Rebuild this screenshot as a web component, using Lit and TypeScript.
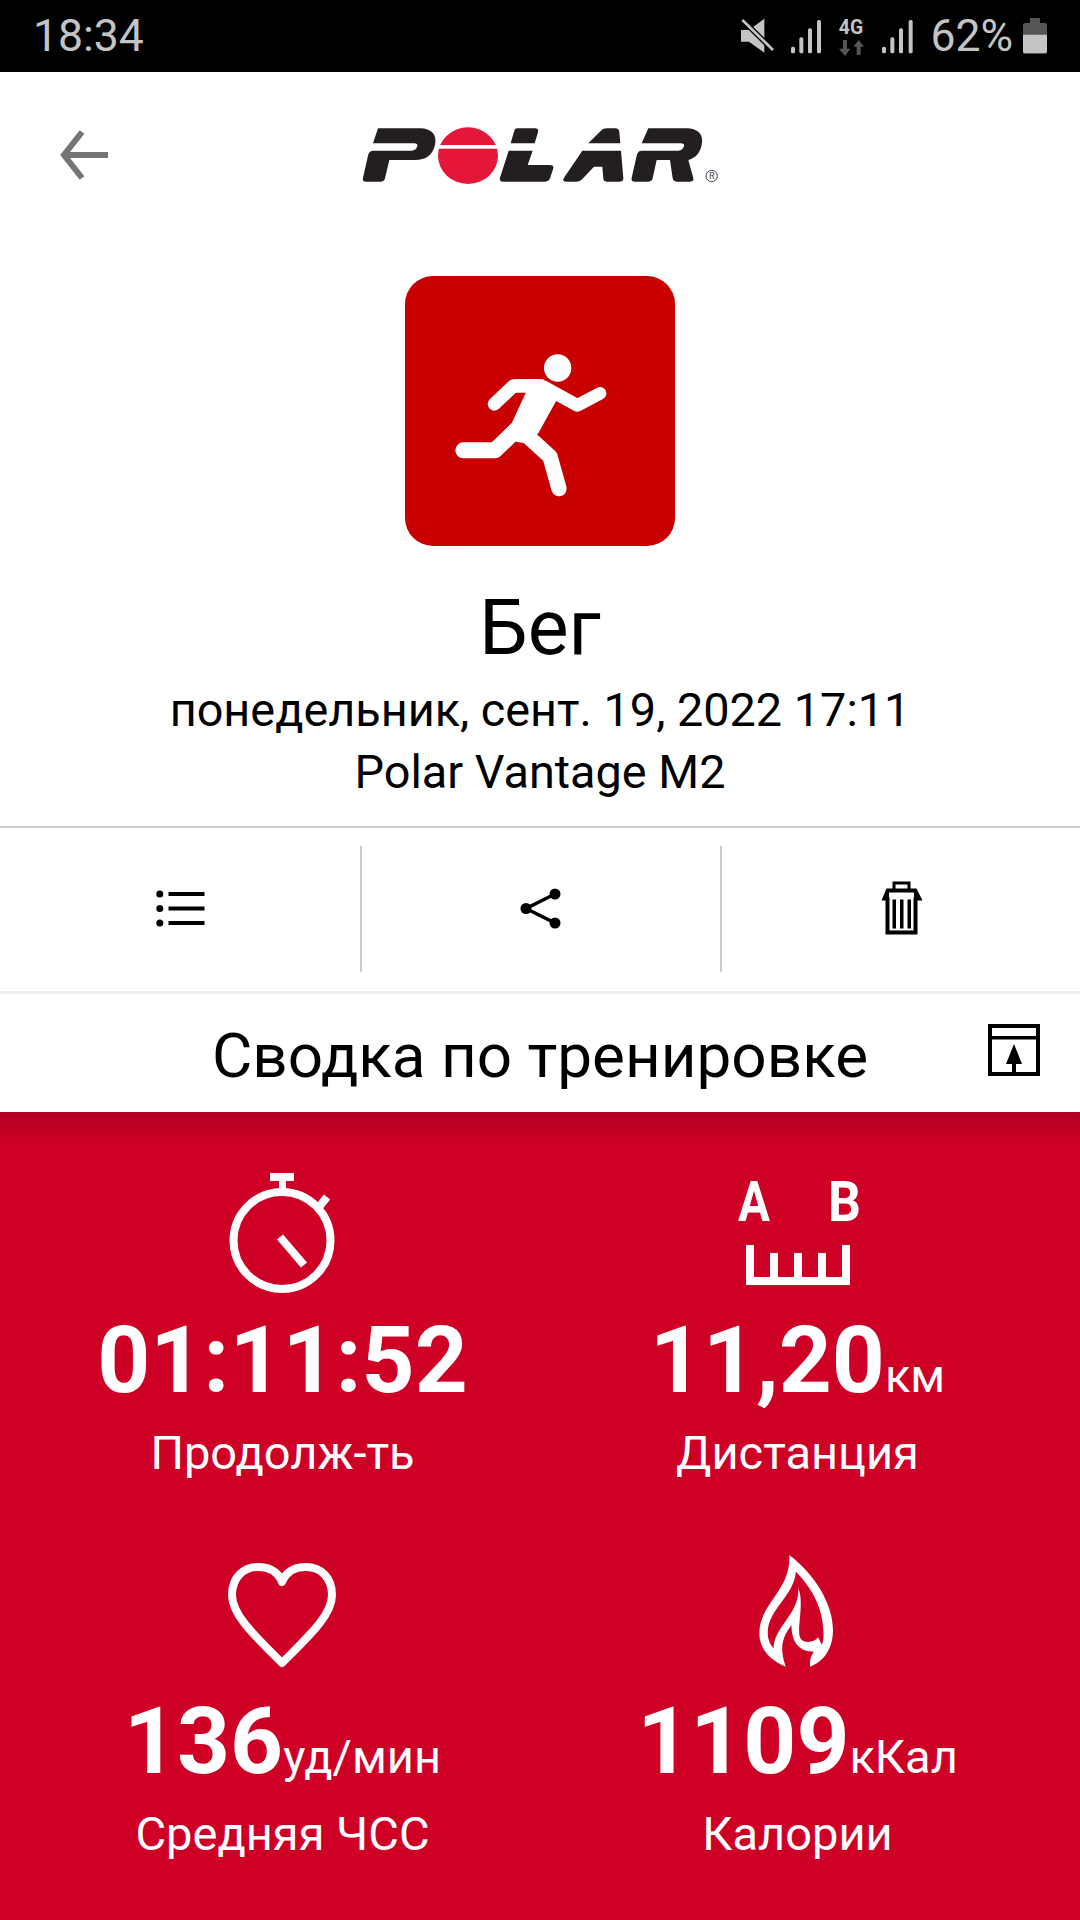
import { LitElement, html, css, svg } from "lit";
import { customElement } from "lit/decorators.js";

const bars = (x: number[]) => svg`${[140, 112, 85, 60].map((y, i) => svg`<rect x=${x[i]} y=${y} width="12" height=${160 - y} rx="5" fill="#c4c4c4"/>`)}`;

const logo = svg`<svg class="logo" viewBox="0 0 1200 270" width="400" height="90" role="img" aria-label="Polar">
  <g fill="#231f20">
    <path d="M114 55H240C275 55 292 75 285 105C278 135 258 150 225 150H148L135 205Q133 215 123 215H78Q66 215 69 203L84 137Q87 122 100 122H215Q228 122 232 108Q234 100 222 100H99Z"/>
    <path d="M532 55H585Q597 55 594 67L584 100H512L522 65Q525 55 532 55Z"/>
    <path d="M506 122H578L563 165H630Q642 165 640 175L630 205Q627 215 615 215H490Q477 215 480 203Z"/>
    <path d="M745 100L785 60Q790 55 800 55H825Q838 55 838 67L841 100Z"/>
    <path d="M727 122H843L850 205Q850 215 840 215H800Q790 215 790 205L787 170H762L727 207Q720 215 710 215H680Q665 215 672 203Z"/>
    <path d="M925 55H1040C1075 55 1092 75 1085 105C1080 130 1065 145 1045 150L1060 205Q1062 215 1050 215H1010Q1000 215 998 205L990 150H950L938 205Q935 215 925 215H885Q872 215 875 203L890 137Q893 122 905 122H1015Q1028 122 1032 108Q1034 100 1022 100H905Z"/>
  </g>
  <ellipse cx="384" cy="137" rx="90" ry="85" fill="#e4173a"/>
  <rect x="290" y="105" width="190" height="11" fill="#fff"/>
  <circle cx="1115" cy="198" r="17" fill="none" stroke="#444" stroke-width="3"/>
  <text x="1115" y="208" font-size="27" text-anchor="middle" font-family="Roboto, sans-serif" fill="#444">R</text>
</svg>`;

@customElement("app-root")
export class AppRoot extends LitElement {
  static styles = css`
    :host { display: block; width: 1080px; height: 1920px; background: #fff; font-family: Roboto, "Noto Sans", sans-serif; color: #000; overflow: hidden; }
    .status { height: 72px; background: #000; color: #c4c4c4; display: flex; align-items: center; justify-content: space-between; padding: 0 33px 0 33px; box-sizing: border-box; }
    .time { font-size: 44.5px; line-height: 72px; }
    .status-right { display: flex; align-items: center; }
    .pct { font-size: 44.5px; line-height: 72px; margin: 0 10px 0 13px; }
    .status svg { display: block; }
    .header { height: 166px; display: grid; grid-template-columns: 1fr auto 1fr; align-items: center; }
    .back { margin-left: 58px; display: block; }
    .logo { display: block; }
    .hero { display: flex; flex-direction: column; align-items: center; padding-top: 38px; height: 550px; }
    .tile { width: 270px; height: 270px; border-radius: 28px; background: #c80000; display: block; }
    .name { font-size: 77px; line-height: 84px; margin-top: 40px; }
    .meta { font-size: 46.8px; line-height: 62px; margin-top: 9px; text-align: center; }
    .actions { border-top: 2px solid #ccc; border-bottom: 3px solid #eee; display: grid; grid-template-columns: 361px 360px 359px; height: 163px; }
    .cell { display: flex; align-items: center; justify-content: center; position: relative; }
    .cell + .cell::before { content: ""; position: absolute; left: -1px; top: 18px; bottom: 19px; width: 2px; background: #ccc; }
    .title-row { height: 118px; display: grid; grid-template-columns: 1fr auto 1fr; align-items: center; }
    .title { font-size: 62px; line-height: 118px; grid-column: 2; padding-top: 3px; box-sizing: border-box; }
    .export { justify-self: end; margin: 0 40px 10px 0; display: block; }
    .stats { background: linear-gradient(#b20022, #cf0026 32px); height: 808px; color: #fff; display: grid; grid-template-columns: 515px 515px; grid-auto-rows: 381px; padding: 0 25px; box-sizing: border-box; }
    .stat { display: flex; flex-direction: column; align-items: center; padding-top: 58px; }
    .stat svg { display: block; }
    .value { font-size: 92.5px; line-height: 92px; font-weight: 700; margin-top: 17px; white-space: nowrap; }
    .unit { font-size: 47px; font-weight: 400; line-height: 0; }
    .label { font-size: 47px; line-height: 52px; margin-top: 20px; }
  `;

  render() {
    return html`
      <div class="status">
        <span class="time">18:34</span>
        <div class="status-right">
          <svg width="180" height="72" viewBox="60 0 540 216">
            <path d="M72 90H96L142 56V158L96 125H72Z" fill="#c4c4c4"/>
            <path d="M72 56L168 150" stroke="#000" stroke-width="16"/>
            <path d="M76 60L168 150" stroke="#c4c4c4" stroke-width="8"/>
            ${bars([222, 247, 273, 300])}
            <text x="402" y="103" font-size="58" font-weight="700" text-anchor="middle" font-family="Roboto, sans-serif" fill="#c4c4c4">4G</text>
            <path d="M378 120H390V146H400L384 168L366 146H378Z" fill="#555"/>
            <path d="M419 165H431V140H441L425 120L409 140H419Z" fill="#555"/>
            ${bars([495, 520, 546, 575])}
          </svg>
          <span class="pct">62%</span>
          <svg width="24" height="36" viewBox="0 0 72 108">
            <path d="M21 0H51V15H66Q72 15 72 21V105Q72 108 66 108H6Q0 108 0 105V21Q0 15 6 15H21Z" fill="#555"/>
            <path d="M0 50H72V100Q72 105 66 105H6Q0 105 0 100Z" fill="#c4c4c4"/>
          </svg>
        </div>
      </div>

      <div class="header">
        <svg class="back" width="56" height="52" viewBox="0 0 56 52" fill="none" stroke="#757575" stroke-width="6">
          <path d="M50 26H7"/><path d="M24 3L6 26L24 49"/>
        </svg>
        ${logo}
      </div>

      <div class="hero">
        <svg class="tile" viewBox="75 48 810 810">
          <circle cx="533" cy="324" r="41" fill="#fff"/>
          <path d="M440 392L395 490L340 548L408 545L435 550L475 520L530 420L490 358H400Z" fill="#fff"/>
          <g fill="none" stroke="#fff" stroke-linecap="round" stroke-linejoin="round">
            <path d="M343 432L400 378H480" stroke-width="40"/>
            <path d="M490 380L592 436L660 400" stroke-width="38"/>
            <path d="M250 571H345L408 510" stroke-width="48"/>
            <path d="M450 535L510 590L537 686" stroke-width="46"/>
          </g>
        </svg>
        <div class="name">Бег</div>
        <div class="meta">понедельник, сент. 19, 2022 17:11<br />Polar Vantage M2</div>
      </div>

      <div class="actions">
        <div class="cell">
          <svg width="60" height="60" viewBox="150.5 879.5 60 60">
            <g fill="#000"><circle cx="159.3" cy="893.5" r="3.5"/><circle cx="159.3" cy="908" r="3.5"/><circle cx="159.3" cy="922.5" r="3.5"/>
            <rect x="168" y="891.5" width="36" height="4"/><rect x="168" y="906" width="36" height="4"/><rect x="168" y="920.5" width="36" height="4"/></g>
          </svg>
        </div>
        <div class="cell">
          <svg width="60" height="60" viewBox="511 879.5 60 60">
            <path d="M555 893.5L526 908L555 922.5" fill="none" stroke="#000" stroke-width="3.5"/>
            <circle cx="555" cy="893.5" r="5.5"/><circle cx="526" cy="908" r="5.5"/><circle cx="555" cy="922.5" r="5.5"/>
          </svg>
        </div>
        <div class="cell">
          <svg width="60" height="60" viewBox="870.5 879.5 60 60">
            <path d="M893.5 889V882.5H908.5V889" fill="none" stroke="#000" stroke-width="3"/>
            <path fill-rule="evenodd" d="M886 888H916L922 900H917V934H885V900H881ZM888.5 892V897H913.5V892ZM889 897V930H913V897Z" fill="#000"/>
            <path d="M892 899H895.5V928H892ZM899.5 899H903V928H899.5ZM907 899H910.5V928H907Z" fill="#000"/>
          </svg>
        </div>
      </div>

      <div class="title-row">
        <div class="title">Сводка по тренировке</div>
        <svg class="export" width="52" height="52" viewBox="988 1022 52 52">
          <rect x="990" y="1024" width="48" height="48" fill="none" stroke="#000" stroke-width="4"/>
          <rect x="990" y="1034" width="48" height="3.5" fill="#000"/>
          <path d="M1014 1042L1022 1062H1016V1072H1012V1062H1006Z" fill="#000"/>
        </svg>
      </div>

      <div class="stats">
        <div class="stat">
          <svg width="140" height="128" viewBox="213 1170 140 128">
            <circle cx="282" cy="1240.5" r="48.5" fill="none" stroke="#fff" stroke-width="8"/>
            <rect x="270" y="1173" width="24" height="8" fill="#fff"/>
            <rect x="279" y="1181" width="7" height="9" fill="#fff"/>
            <path d="M319 1207L327 1197M280 1237L304 1265" stroke="#fff" stroke-width="8" fill="none"/>
          </svg>
          <div class="value">01:11:52</div>
          <div class="label">Продолж-ть</div>
        </div>
        <div class="stat">
          <svg width="140" height="128" viewBox="728 1170 140 128">
            <text x="738" y="1221" font-size="56" font-weight="700" font-family="Roboto, sans-serif" fill="#fff" textLength="32" lengthAdjust="spacingAndGlyphs">A</text>
            <text x="828" y="1221" font-size="56" font-weight="700" font-family="Roboto, sans-serif" fill="#fff" textLength="33" lengthAdjust="spacingAndGlyphs">B</text>
            <path d="M746 1245H754V1277H770V1253H778V1277H794V1253H802V1277H818V1253H826V1277H842V1245H850V1285H746Z" fill="#fff"/>
          </svg>
          <div class="value">11,20<span class="unit">км</span></div>
          <div class="label">Дистанция</div>
        </div>
        <div class="stat">
          <svg width="140" height="128" viewBox="213 1551 140 128">
            <path d="M282 1663C255 1636 232 1615 232 1595C232 1578 243 1567 258 1567C270 1567 278 1572 282 1582C286 1572 294 1567 306 1567C321 1567 332 1578 332 1595C332 1615 309 1636 282 1663Z" fill="none" stroke="#fff" stroke-width="8" stroke-linejoin="round"/>
          </svg>
          <div class="value">136<span class="unit">уд/мин</span></div>
          <div class="label">Средняя ЧСС</div>
        </div>
        <div class="stat">
          <svg width="140" height="128" viewBox="728 1551 140 128">
            <g transform="translate(200 1540) scale(0.4464 0.3333)">
              <path fill="#fff" fill-rule="evenodd" d="M1320 45C1375 100 1418 190 1418 270C1418 330 1395 365 1367 380C1365 360 1368 350 1375 335C1355 335 1325 325 1325 255C1300 300 1300 330 1312 380C1275 360 1253 325 1253 280C1253 190 1325 150 1320 45ZM1335 95C1330 170 1270 210 1272 280C1272 300 1278 315 1285 325C1285 260 1345 220 1340 143C1355 190 1335 270 1345 295C1350 310 1375 310 1385 292L1393 315C1400 290 1395 265 1395 250C1390 190 1365 135 1335 95Z"/>
            </g>
          </svg>
          <div class="value">1109<span class="unit">кКал</span></div>
          <div class="label">Калории</div>
        </div>
      </div>
    `;
  }
}
